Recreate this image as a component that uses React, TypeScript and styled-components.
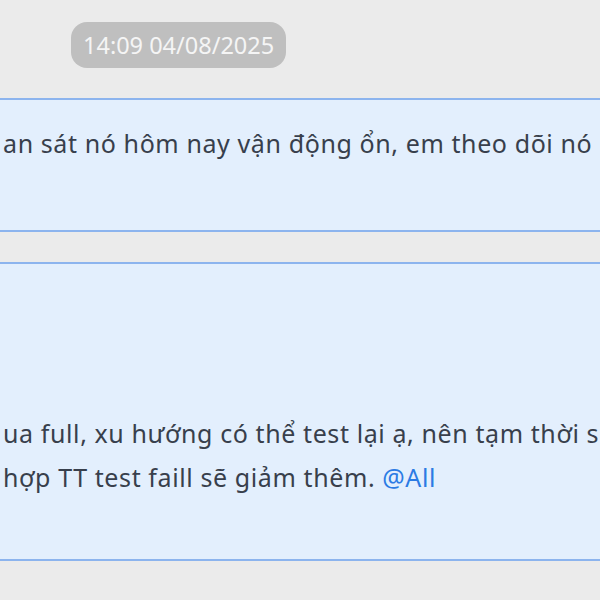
import React from 'react';
import styled, { createGlobalStyle } from 'styled-components';

const GlobalStyle = createGlobalStyle`
  html, body {
    margin: 0;
    padding: 0;
    background: #ebebeb;
    overflow: hidden;
  }
  body {
    font-family: "Noto Sans", "Open Sans", sans-serif;
  }
`;

const Page = styled.div`
  width: 600px;
  height: 600px;
  display: flex;
  flex-direction: column;
  background: #ebebeb;
  overflow: hidden;
`;

const TimeRow = styled.div`
  display: flex;
  padding: 22px 0 0 71px;
  height: 98px;
  box-sizing: border-box;
`;

const TimePill = styled.div`
  height: 46px;
  padding: 0 12px;
  border-radius: 16px;
  background: #bfbfbf;
  color: #f5f5f5;
  font-size: 23.5px;
  line-height: 46px;
  white-space: nowrap;
`;

const Thread = styled.div`
  display: flex;
  flex-direction: column;
  gap: 30px;
`;

const Bubble = styled.div<{ $height: number; $padTop: number }>`
  height: ${({ $height }) => $height + 4}px;
  padding: ${({ $padTop }) => $padTop}px 0 0 3px;
  background: #e3effd;
  border-top: 2px solid #8cb4ee;
  border-bottom: 2px solid #8cb4ee;
  box-sizing: border-box;
  overflow: hidden;
`;

const Line = styled.div`
  font-size: 25px;
  letter-spacing: 0.6px;
  line-height: 44px;
  color: #383f4c;
  white-space: nowrap;
`;

const Mention = styled.span`
  color: #2b7be4;
`;

interface Message {
  lines: React.ReactNode[];
  height: number;
  padTop: number;
}

const App: React.FC = () => {
  const messages: Message[] = [
    {
      lines: ['an sát nó hôm nay vận động ổn, em theo dõi nó'],
      height: 130,
      padTop: 21,
    },
    {
      lines: [
        'ua full, xu hướng có thể test lại ạ, nên tạm thời sẽ để',
        <>
          hợp TT test faill sẽ giảm thêm. <Mention>@All</Mention>
        </>,
      ],
      height: 295,
      padTop: 147,
    },
  ];

  return (
    <>
      <GlobalStyle />
      <Page>
        <TimeRow>
          <TimePill>14:09 04/08/2025</TimePill>
        </TimeRow>
        <Thread>
          {messages.map((m, i) => (
            <Bubble key={i} $height={m.height} $padTop={m.padTop}>
              {m.lines.map((line, j) => (
                <Line key={j}>{line}</Line>
              ))}
            </Bubble>
          ))}
        </Thread>
      </Page>
    </>
  );
};

export default App;
